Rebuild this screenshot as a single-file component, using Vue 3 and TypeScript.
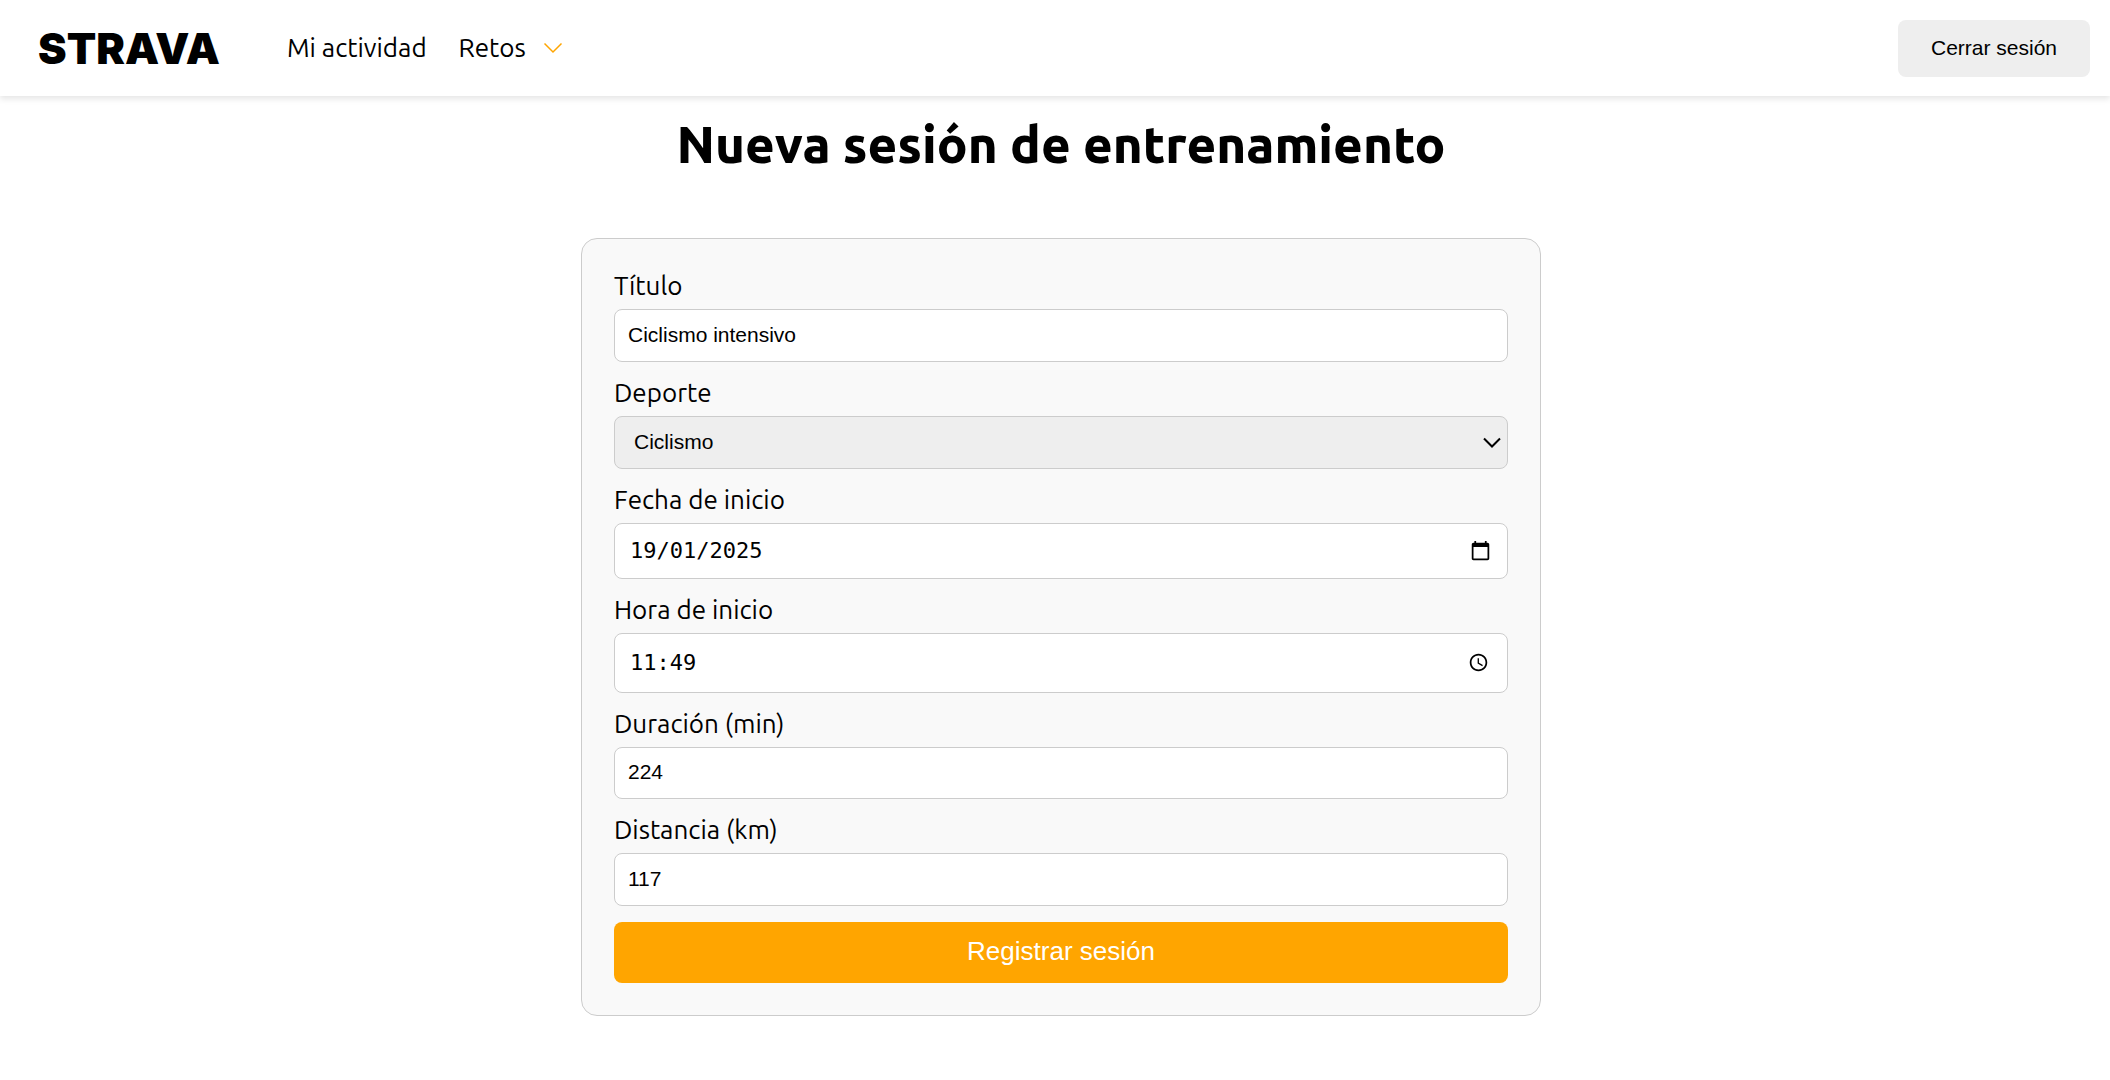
<script setup lang="ts">
import { ref } from 'vue'

const title = ref('Ciclismo intensivo')
const sport = ref('Ciclismo')
const sports: string[] = ['Ciclismo', 'Running', 'Ciclismo y running']
const startDate = ref('19/01/2025')
const startTime = ref('11:49')
const duration = ref(224)
const distance = ref(117)
</script>

<template>
  <div class="page" lang="es-ES">
    <header class="topbar">
      <a class="logo" href="#">STRAVA</a>
      <nav class="nav">
        <a href="#">Mi actividad</a>
        <a href="#">Retos
          <svg class="caret" viewBox="0 0 20 12" aria-hidden="true">
            <path d="M1.5 1.5 L10 10 L18.5 1.5" />
          </svg>
        </a>
      </nav>
      <button class="logout" type="button">Cerrar sesión</button>
    </header>

    <main class="content">
      <h1>Nueva sesión de entrenamiento</h1>
      <form class="card" @submit.prevent>
        <div class="field">
          <label for="title">Título</label>
          <input id="title" v-model="title" class="box" type="text" />
        </div>
        <div class="field">
          <label for="sport">Deporte</label>
          <div class="select-wrap">
            <select id="sport" v-model="sport" class="box">
              <option v-for="s in sports" :key="s" :value="s">{{ s }}</option>
            </select>
            <svg class="arrow" viewBox="0 0 18 11" aria-hidden="true">
              <path d="M1 1.5 L9 9.5 L17 1.5" />
            </svg>
          </div>
        </div>
        <div class="field">
          <label for="date">Fecha de inicio</label>
          <div class="box picker date">
            <input id="date" v-model="startDate" type="text" inputmode="numeric" />
            <button type="button" aria-label="Abrir calendario">
              <svg viewBox="0 0 24 24" aria-hidden="true">
                <path d="M20 3h-1V1h-2v2H7V1H5v2H4c-1.100 0-2 .9-2 2v16c0 1.100.9 2 2 2h16c1.100 0 2-.9 2-2V5c0-1.100-.9-2-2-2zm0 18H4V8h16v13z" />
              </svg>
            </button>
          </div>
        </div>
        <div class="field">
          <label for="time">Hora de inicio</label>
          <div class="box picker time">
            <input id="time" v-model="startTime" type="text" inputmode="numeric" />
            <button type="button" aria-label="Elegir hora">
              <svg viewBox="0 0 24 24" aria-hidden="true">
                <path d="M11.990 2C6.470 2 2 6.480 2 12s4.470 10 9.990 10C17.520 22 22 17.520 22 12S17.520 2 11.990 2zM12 20c-4.420 0-8-3.580-8-8s3.580-8 8-8 8 3.580 8 8-3.580 8-8 8z" />
                <path d="M12.500 7H11v6l5.250 3.150.75-1.230-4.500-2.670z" />
              </svg>
            </button>
          </div>
        </div>
        <div class="field">
          <label for="duration">Duración (min)</label>
          <input id="duration" v-model="duration" class="box short" type="number" />
        </div>
        <div class="field">
          <label for="distance">Distancia (km)</label>
          <input id="distance" v-model="distance" class="box" type="number" />
        </div>
        <button class="submit" type="submit">Registrar sesión</button>
      </form>
    </main>
  </div>
</template>

<style>
body {
  margin: 0;
  background: #fff;
}
</style>

<style scoped>
.page {
  font-family: Ubuntu, "Noto Sans", sans-serif;
  font-size: 26px;
  color: #000;
}

.topbar {
  display: flex;
  align-items: center;
  box-sizing: border-box;
  height: 96px;
  padding: 0 20px 0 38px;
  background: #fff;
  box-shadow: 0 3px 6px rgba(0, 0, 0, 0.1);
}

.logo {
  width: 249px;
  font-family: Inter, sans-serif;
  font-size: 43px;
  font-weight: 900;
  line-height: 56px;
  color: #000;
  text-decoration: none;
}

.nav {
  display: flex;
  gap: 32px;
  line-height: 28px;
}

.nav a {
  display: flex;
  align-items: center;
  color: #000;
  text-decoration: none;
}

.caret {
  width: 20px;
  height: 12px;
  margin-left: 17px;
  fill: none;
  stroke: #ffa500;
  stroke-width: 1.5;
}

.logout {
  margin-left: auto;
  width: 192px;
  height: 57px;
  border: 0;
  border-radius: 8px;
  background: #eee;
  color: #000;
  font: 21px "Liberation Sans", Arial, sans-serif;
}

.content {
  padding: 16px 0 64px 12px;
}

h1 {
  margin: 0 0 62px;
  font-size: 51px;
  line-height: 64px;
  font-weight: 800;
  text-align: center;
}

.card {
  display: flex;
  flex-direction: column;
  gap: 16px;
  box-sizing: border-box;
  max-width: 960px;
  margin: 0 auto;
  padding: 32px;
  border: 1px solid #ccc;
  border-radius: 16px;
  background: #f9f9f9;
}

.field {
  display: flex;
  flex-direction: column;
  gap: 8px;
}

label {
  line-height: 30px;
}

.box {
  box-sizing: border-box;
  width: 100%;
  height: 53px;
  margin: 0;
  padding: 0 13px 2px;
  border: 1px solid #ccc;
  border-radius: 8px;
  background: #fff;
  color: #000;
  font: 21px "Liberation Sans", Arial, sans-serif;
}

.short {
  height: 52px;
}

.select-wrap {
  position: relative;
  display: flex;
}

select.box {
  appearance: none;
  padding: 0 32px 2px 19px;
  background: #eee;
}

.arrow {
  position: absolute;
  top: 21px;
  right: 7px;
  width: 18px;
  height: 11px;
  fill: none;
  stroke: #000;
  stroke-width: 2;
  pointer-events: none;
}

.picker {
  display: flex;
  align-items: center;
  padding: 0 16px 2px 15px;
}

.picker input {
  flex: 1;
  min-width: 0;
  padding: 0;
  border: 0;
  background: transparent;
  color: #000;
  font: 22px "DejaVu Sans Mono", monospace;
}

.picker button {
  display: flex;
  padding: 0;
  border: 0;
  background: none;
}

.picker svg {
  width: 21px;
  height: 21px;
}

.date {
  height: 56px;
}

.time {
  height: 60px;
  padding-right: 18px;
}

.submit {
  height: 61px;
  padding: 0 0 2px;
  border: 0;
  border-radius: 8px;
  background: #ffa500;
  color: #fff;
  font: 26px "Liberation Sans", Arial, sans-serif;
}
</style>
